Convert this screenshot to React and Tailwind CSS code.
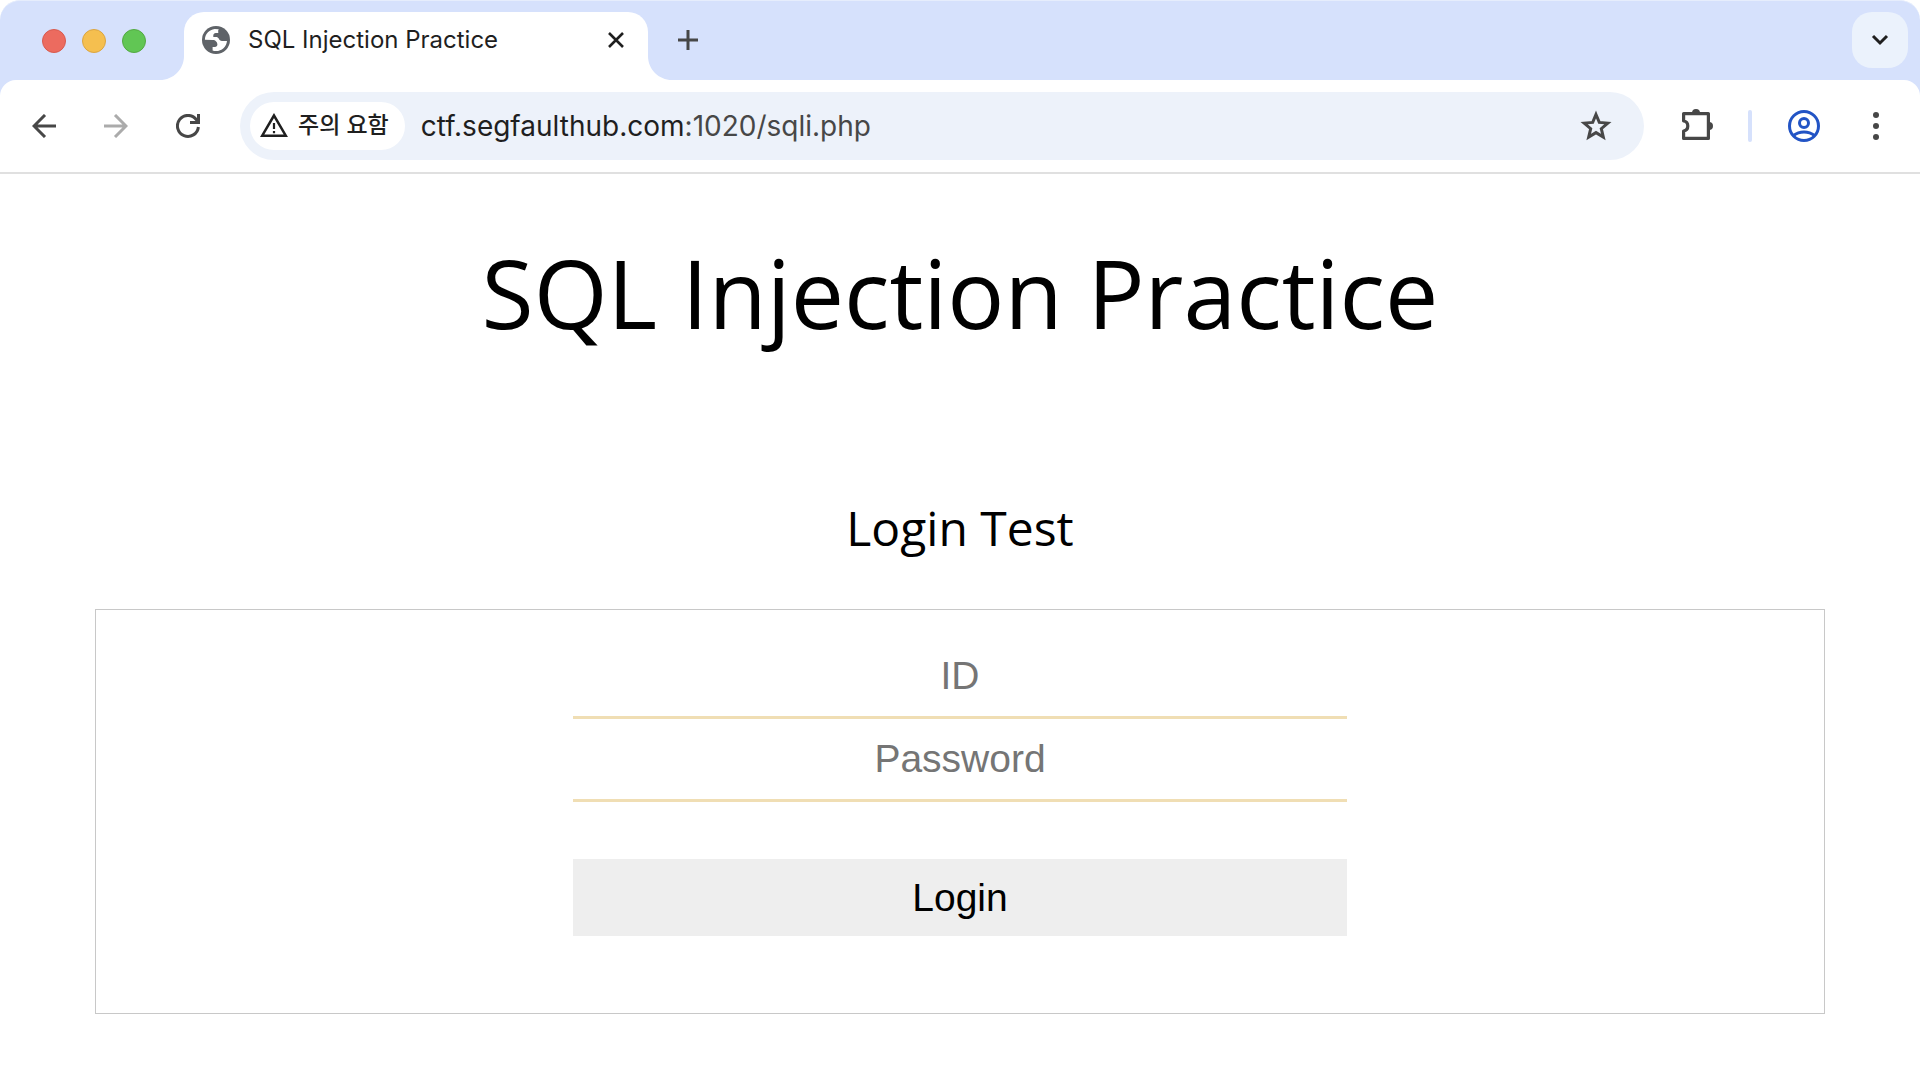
import React from "react";

const chromeFont = "font-['Inter','Noto_Sans_CJK_KR',sans-serif]";

function Tab() {
  return (
    <div className="relative mt-3 flex h-[68px] w-[464px] items-start rounded-t-[20px] bg-white pl-[18px] pr-4 pt-3">
      <svg className="absolute -left-6 bottom-0 size-6 text-white" viewBox="0 0 24 24" fill="currentColor" aria-hidden="true">
        <path d="M24 0v24H0C13.3 24 24 13.3 24 0z" />
      </svg>
      <svg className="absolute -right-6 bottom-0 size-6 text-white" viewBox="0 0 24 24" fill="currentColor" aria-hidden="true">
        <path d="M0 0v24h24C10.7 24 0 13.3 0 0z" />
      </svg>
      <svg className="mt-0.5 size-7 shrink-0 text-[#5f6368]" viewBox="0 0 28 28" aria-hidden="true">
        <circle cx="14" cy="14" r="14" fill="currentColor" />
        <path
          fill="#fff"
          d="M2.9 13.7C2.9 8.1 7.2 3.500 12.7 2.9L16.8 3.2C16.3 3.9 16 4.7 16.2 5.500L16.3 6.9H13.7C12.4 6.9 11.3 8 11.3 9.3V11H14C15.3 11 16.3 11.6 16.7 12.6C17.2 14 18.5 15 20 15H25C24.5 20.7 19.8 25.1 14 25.1C12.8 25.1 11.7 24.9 10.6 24.5V21H13C14.3 21 15.4 19.9 15.4 18.6C15.4 16 13.4 13.9 10.8 13.9L2.9 13.7Z"
        />
      </svg>
      <span className="ml-[18px] flex-1 whitespace-nowrap text-[24px] leading-8 text-[#1f1f1f]">SQL Injection Practice</span>
      <button type="button" aria-label="Close tab" className="flex size-8 items-center justify-center text-[#1f1f1f]">
        <svg className="size-4" viewBox="0 0 16 16" fill="none" stroke="currentColor" strokeWidth="2.6" aria-hidden="true">
          <path d="M1 1l14 14M15 1L1 15" />
        </svg>
      </button>
    </div>
  );
}

function TabStrip() {
  return (
    <div className="flex h-20 items-start overflow-hidden rounded-t-[20px] border-t border-[#e6edfc] bg-[#d6e1fc]">
      <div className="-mt-px flex w-full items-start">
        <div className="ml-[42px] mt-[29px] flex w-[142px] gap-4">
          <span className="size-6 rounded-full border border-[#d85a4e] bg-[#ec6b5f]" />
          <span className="size-6 rounded-full border border-[#dba541] bg-[#f5bf4f]" />
          <span className="size-6 rounded-full border border-[#54a942] bg-[#61c654]" />
        </div>
        <Tab />
        <button type="button" aria-label="New tab" className="ml-6 mt-6 flex size-8 items-center justify-center text-[#474747]">
          <svg className="size-5" viewBox="0 0 20 20" fill="none" stroke="currentColor" strokeWidth="3" aria-hidden="true">
            <path d="M10 0v20M0 10h20" />
          </svg>
        </button>
        <button type="button" aria-label="Search tabs" className="ml-auto mr-3 mt-3 flex size-14 items-center justify-center rounded-[20px] bg-[#ebf2fc] text-[#1f1f1f]">
          <svg className="size-5" viewBox="0 0 20 20" fill="none" stroke="currentColor" strokeWidth="3" aria-hidden="true">
            <path d="M3 6l7 7 7-7" />
          </svg>
        </button>
      </div>
    </div>
  );
}

function Toolbar() {
  return (
    <div className="bg-[#d6e1fc]">
      <div className="flex h-[94px] items-center rounded-t-[16px] border-b-2 border-[#e0e0e0] bg-white pl-7 pr-7">
        <button type="button" aria-label="Back" className="flex size-8 items-center justify-center text-[#474747]">
          <svg className="size-6" viewBox="0 0 24 24" fill="none" stroke="currentColor" strokeWidth="3" aria-hidden="true">
            <path d="M24 12H2M13 1L2 12l11 11" />
          </svg>
        </button>
        <button type="button" aria-label="Forward" className="ml-10 flex size-8 items-center justify-center text-[#ababab]">
          <svg className="size-6" viewBox="0 0 24 24" fill="none" stroke="currentColor" strokeWidth="3" aria-hidden="true">
            <path d="M0 12h22M11 1l11 11-11 11" />
          </svg>
        </button>
        <button type="button" aria-label="Reload" className="ml-10 flex size-8 items-center justify-center text-[#474747]">
          <svg className="size-6" viewBox="0 0 24 24" fill="none" stroke="currentColor" strokeWidth="3" aria-hidden="true">
            <path d="M22.4 13A10.5 10.5 0 1 1 20.5 5.8L22 8M22.5 0v8.5H14" />
          </svg>
        </button>
        <div className="ml-9 flex h-[68px] flex-1 items-center rounded-full bg-[#edf2fa] pl-2.5 pr-8">
          <button type="button" className="flex h-12 items-center rounded-full bg-white pl-2.5 pr-4 text-[23px] leading-8 text-[#1f1f1f]">
            <svg className="size-7" viewBox="0 0 28 28" fill="none" stroke="currentColor" aria-hidden="true">
              <path strokeWidth="2.5" d="M14 3.500L2.2 23.7h23.6z" />
              <path strokeWidth="2.2" d="M14 11v6M14 19v2.3" />
            </svg>
            <span className="ml-2.5 whitespace-nowrap pb-0.5 font-medium">주의 요함</span>
          </button>
          <div role="textbox" aria-label="Address" className="ml-4 flex-1 whitespace-nowrap text-[28px] leading-9 text-[#1f1f1f]">
            ctf.segfaulthub.com<span className="text-[#474747]">:1020/sqli.php</span>
          </div>
          <button type="button" aria-label="Bookmark" className="flex size-8 items-center justify-center text-[#474747]">
            <svg className="size-8" viewBox="0 0 32 32" fill="none" stroke="currentColor" strokeWidth="3" aria-hidden="true">
              <path d="M16 4.500l3.300 7.900 8.500.7-6.500 5.600 2 8.300-7.300-4.400L8.700 27l2-8.300-6.500-5.600 8.500-.7z" />
            </svg>
          </button>
        </div>
        <button type="button" aria-label="Extensions" className="ml-9 flex size-9 items-center justify-center text-[#474747]">
          <svg className="size-9" viewBox="0 0 36 36" aria-hidden="true">
            <path fill="none" stroke="currentColor" strokeWidth="3.2" strokeLinejoin="round" d="M3.6 5.600h24.800v24.800h-24.800v-7.400c2.800-.4 4.200-2.400 4.200-5s-1.400-4.600-4.200-5z" />
            <path fill="currentColor" d="M12 5a4 4 0 0 1 8 0zM29 14a4 4 0 0 1 0 8z" />
          </svg>
        </button>
        <span className="ml-8 h-8 w-1 rounded-full bg-[#d6e1fc]" />
        <button type="button" aria-label="Profile" className="ml-9 flex size-8 items-center justify-center text-[#2254c5]">
          <svg className="size-8" viewBox="0 0 32 32" fill="none" stroke="currentColor" strokeWidth="3" aria-hidden="true">
            <circle cx="16" cy="16" r="14.5" />
            <circle cx="16" cy="13" r="4.500" />
            <path d="M5.500 25.500c6-4.700 15-4.700 21 0" />
          </svg>
        </button>
        <button type="button" aria-label="Menu" className="ml-10 flex size-8 items-center justify-center text-[#474747]">
          <svg className="size-8" viewBox="0 0 32 32" fill="currentColor" aria-hidden="true">
            <circle cx="16" cy="5" r="3" />
            <circle cx="16" cy="16" r="3" />
            <circle cx="16" cy="27" r="3" />
          </svg>
        </button>
      </div>
    </div>
  );
}

const fieldClass =
  "h-[83px] w-full border-b-[3px] border-[#f0deb4] bg-transparent text-center text-[39px] leading-[46px] text-black outline-none placeholder:text-[#757575]";

export default function App() {
  return (
    <div className="min-h-screen bg-white">
      <header className={chromeFont}>
        <TabStrip />
        <Toolbar />
      </header>
      <main className="px-[95px] pb-16 pt-12 text-black">
        <h1 className="text-center font-['Open_Sans',sans-serif] text-[95px] leading-[140px]">SQL Injection Practice</h1>
        <h2 className="mt-[130px] text-center font-['Open_Sans',sans-serif] text-[48px] leading-[72px]">Login Test</h2>
        <form className="mt-[45px] border border-[#c8c8c8] pb-[77px] pt-[26px] font-['Liberation_Sans',sans-serif]">
          <div className="mx-auto flex w-[774px] max-w-full flex-col">
            <input type="text" aria-label="ID" placeholder="ID" className={fieldClass} />
            <input type="password" aria-label="Password" placeholder="Password" className={fieldClass} />
            <button type="button" className="mt-[57px] h-[77px] bg-[#eeeeee] text-[39px] leading-[46px] text-black">Login</button>
          </div>
        </form>
      </main>
    </div>
  );
}
